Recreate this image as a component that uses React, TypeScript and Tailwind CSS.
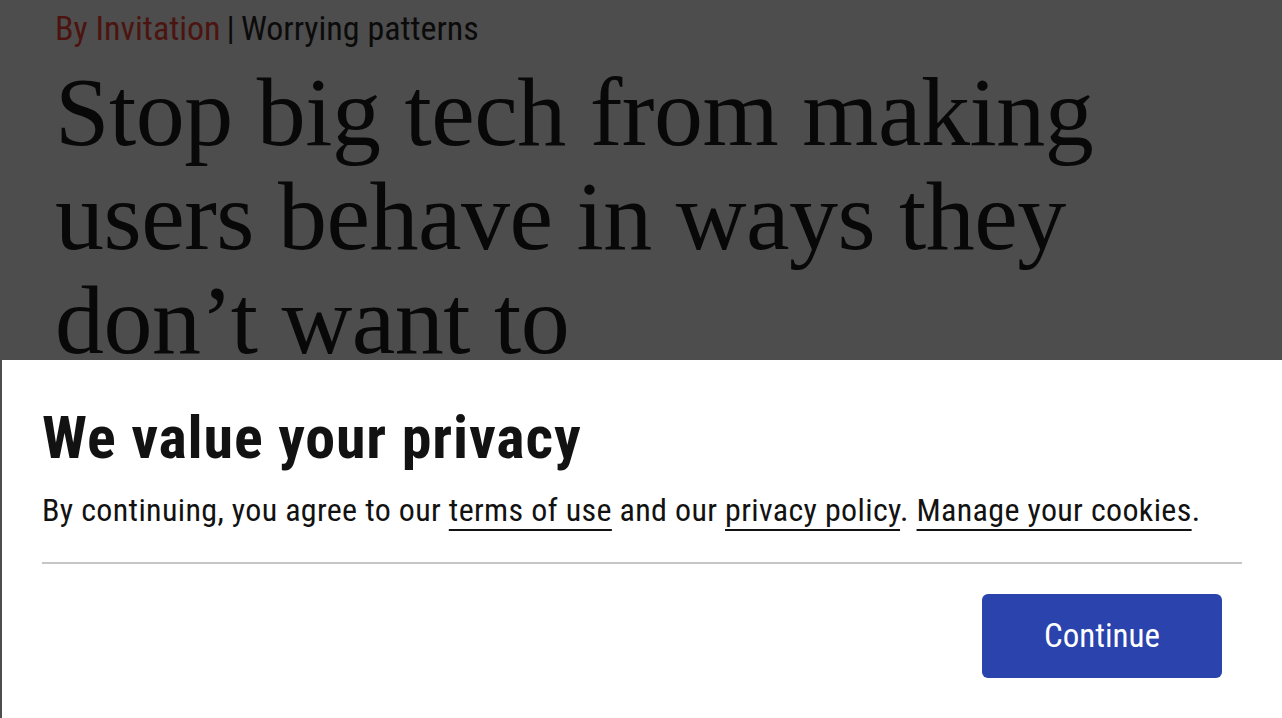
export default function App() {
  return (
    <div className="relative w-[1282px] h-[718px] overflow-hidden bg-[#4d4d4d]">
      <div className="pl-[55px] pt-[8px]">
        <p className="text-[34px] leading-[40px] text-[#0b0b0b]" style={{ fontFamily: '"Liberation Sans Narrow", "Roboto Condensed", Roboto, sans-serif' }}>
          <span className="text-[#4c1410]">By Invitation</span>
          <span className="mx-[6px]">|</span>
          <span>Worrying patterns</span>
        </p>
        <h1 className="mt-[12px] text-[98px] leading-[104px] text-[#080808] tracking-[-0.5px]" style={{ fontFamily: '"Liberation Serif", serif' }}>
          Stop big tech from making<br />users behave in ways they<br />don’t want to
        </h1>
      </div>

      <div className="absolute left-[2px] right-0 top-[360px] bottom-0 bg-white px-[40px] pt-[47px]" style={{ fontFamily: '"Liberation Sans Narrow", "Roboto Condensed", Roboto, sans-serif' }}>
        <h2 className="text-[60px] leading-[62px] font-bold text-[#121212] tracking-[0.85px]">We value your privacy</h2>
        <p className="mt-[21px] text-[32px] leading-[40px] text-[#121212] tracking-[0.35px]">
          By continuing, you agree to our{' '}
          <a className="underline decoration-2 underline-offset-[8px]">terms of use</a> and our{' '}
          <a className="underline decoration-2 underline-offset-[8px]">privacy policy</a>.{' '}
          <a className="underline decoration-2 underline-offset-[8px]">Manage your cookies</a>.
        </p>
        <div className="mt-[32px] h-[2px] bg-[#c6c6c6]" />
        <div className="flex justify-end pt-[30px] pr-[20px]">
          <button className="w-[240px] h-[84px] rounded-[6px] bg-[#2a43ad] text-white text-[33px]">Continue</button>
        </div>
      </div>
    </div>
  )
}
